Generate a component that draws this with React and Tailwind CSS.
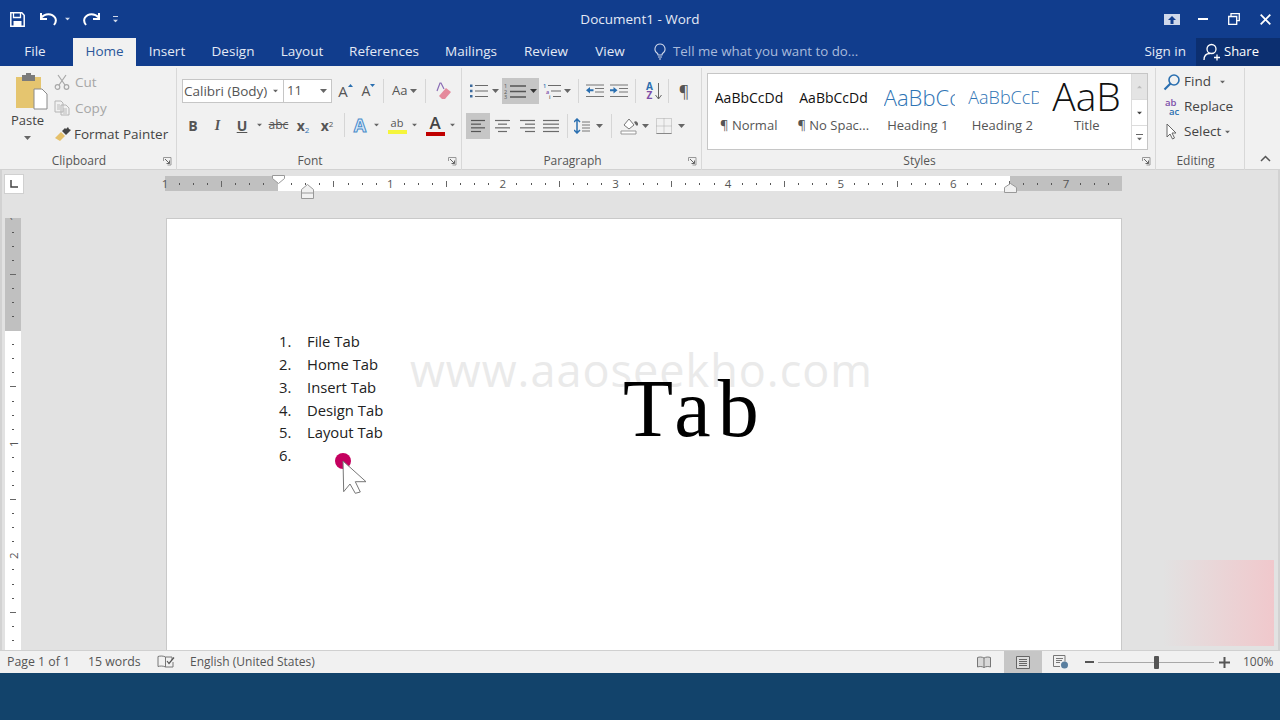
import React from "react";

const Caret = ({ className = "", color = "#666" }) => (
  <svg width="7" height="4" viewBox="0 0 7 4" className={"shrink-0 " + className}>
    <path d="M0 0h7L3.5 4z" fill={color} />
  </svg>
);

const Sep = ({ className = "" }) => <div className={"w-px bg-[#d6d6d6] shrink-0 " + className} />;

const Launcher = () => (
  <svg width="9" height="9" viewBox="0 0 9 9" className="shrink-0">
    <path d="M.5 4V.5H8V8H4.5" fill="none" stroke="#999" />
    <path d="M2 2l4.5 4.5M6.5 3.5v3h-3" fill="none" stroke="#666" />
  </svg>
);

const Lines = ({ w = 18, rows, color = "#6b6b6b" }) => (
  <svg width={w} height="14" viewBox={`0 0 ${w} 14`} className="shrink-0">
    {rows.map(([x1, x2], i) => (
      <path key={i} d={`M${x1} ${1.5 + i * (11 / (rows.length - 1))}H${x2}`} stroke={color} strokeWidth="1.2" />
    ))}
  </svg>
);

const Group = ({ label, launcher = true, className, children }) => (
  <div className={"flex flex-col shrink-0 border-r border-[#d8d8d8] h-[102px] mt-[2px] " + className}>
    <div className="flex-1 -mt-[2px]">{children}</div>
    <div className="h-[18px] flex items-center pr-[4px] text-[12px] text-[#555]">
      <div className="flex-1 text-center pr-[5px]">{label}</div>
      {launcher && <Launcher />}
    </div>
  </div>
);

const TitleBar = () => (
  <div className="h-[38px] bg-[#113d8d] flex items-center text-white shrink-0">
    <div className="w-[540px] flex items-center pl-[10px]">
      <svg width="15" height="15" viewBox="0 0 15 15">
        <path d="M.8.8h11l2.4 2.4v11H.8z" fill="none" stroke="#fff" strokeWidth="1.5" />
        <path d="M3.5 1v4.5h7V1" fill="none" stroke="#fff" strokeWidth="1.3" />
        <path d="M3.5 14V9h8v5" fill="#fff" />
      </svg>
      <svg width="18" height="14" viewBox="0 0 18 14" className="ml-[15px]">
        <path d="M1.5 5.5C5 1 12 1 15 5.5c1.3 2.2 1 5-1 7.5" fill="none" stroke="#fff" strokeWidth="2" />
        <path d="M1 1v6h6" fill="none" stroke="#fff" strokeWidth="2" />
      </svg>
      <Caret className="ml-[6px] scale-75" color="#cfd8ea" />
      <svg width="18" height="14" viewBox="0 0 18 14" className="ml-[11px]">
        <path d="M16.5 5.5C13 1 6 1 3 5.5c-1.3 2.2-1 5 1 7.5" fill="none" stroke="#fff" strokeWidth="2" />
        <path d="M17 1v6h-6" fill="none" stroke="#fff" strokeWidth="2" />
      </svg>
      <div className="ml-[12px] flex flex-col gap-[2px] items-center">
        <div className="w-[5px] h-px bg-[#cfd8ea]" />
        <Caret className="scale-75" color="#cfd8ea" />
      </div>
    </div>
    <div className="w-[200px] text-center text-[13.5px] text-[#e4eaf5]">Document1 - Word</div>
    <div className="flex-1 flex items-center justify-end">
      <svg width="16" height="11" viewBox="0 0 16 11">
        <rect x=".5" y=".5" width="15" height="10" fill="#cfd8ea" stroke="#cfd8ea" />
        <path d="M8 2l4 4H9.5v4h-3V6H4z" fill="#113d8d" />
      </svg>
      <div className="w-[10px] h-[2px] bg-white ml-[18px]" />
      <svg width="12" height="12" viewBox="0 0 12 12" className="ml-[20px]">
        <path d="M3 3V.7h8.3v7H9M.7 3.5h8v7.8h-8z" fill="none" stroke="#fff" strokeWidth="1.3" />
      </svg>
      <svg width="11" height="11" viewBox="0 0 11 11" className="ml-[20px] mr-[9px]">
        <path d="M.7.7l9.6 9.6M10.3.7L.7 10.3" stroke="#fff" strokeWidth="1.8" />
      </svg>
    </div>
  </div>
);

const tabs = [
  ["Insert", "w-[62px]"],
  ["Design", "w-[70px]"],
  ["Layout", "w-[68px]"],
  ["References", "w-[96px]"],
  ["Mailings", "w-[78px]"],
  ["Review", "w-[72px]"],
  ["View", "w-[56px]"],
];

const TabBar = () => (
  <div className="h-[28px] bg-[#113d8d] flex items-stretch text-[13.5px] text-[#e4eaf5] shrink-0">
    <div className="w-[70px] flex items-center justify-center pb-[1px]">File</div>
    <div className="ml-[3px] w-[63px] bg-[#f1f1f1] text-[#2b579a] flex items-center justify-center pb-[1px]">Home</div>
    {tabs.map(([name, w]) => (
      <div key={name} className={"flex items-center justify-center pb-[1px] " + w}>{name}</div>
    ))}
    <div className="ml-[15px] flex items-center text-[#a9bbdc] pb-[1px]">
      <svg width="14" height="17" viewBox="0 0 14 17">
        <path d="M7 1a5 5 0 0 0-3 9c.7.6 1 1.3 1 2h4c0-.7.3-1.4 1-2a5 5 0 0 0-3-9zM5 14h4M6 16h2" fill="none" stroke="#cfd8ea" strokeWidth="1.1" />
      </svg>
      <span className="ml-[6px] text-[13.3px]">Tell me what you want to do...</span>
    </div>
    <div className="flex-1 flex items-center justify-end pr-[10px] pb-[1px] text-[#e4eaf5]">Sign in</div>
    <div className="w-[84px] bg-[#0c2f70] flex items-center pl-[7px] pb-[1px]">
      <svg width="18" height="18" viewBox="0 0 18 18">
        <circle cx="8.5" cy="6" r="4.5" fill="none" stroke="#fff" strokeWidth="1.3" />
        <path d="M1 17c0-4.5 2.5-6.5 6-6.5M11 14.5h6M14 11.5v6" fill="none" stroke="#fff" strokeWidth="1.3" />
      </svg>
      <span className="ml-[3px] text-white text-[13px]">Share</span>
    </div>
  </div>
);

const Clipboard = () => (
  <Group label="Clipboard" className="w-[177px]">
    <div className="flex">
      <div className="w-[54px] flex flex-col items-center pt-[7px] pl-[1px]">
        <svg width="34" height="38" viewBox="0 0 34 38" className="ml-[8px]">
          <rect x="1" y="4" width="25" height="31" fill="#e5c56f" />
          <rect x="7" y="2" width="13" height="6" fill="#7b7b7b" />
          <rect x="11" y="0" width="5" height="4" fill="#7b7b7b" />
          <path d="M19 16h8l5 5v15H19z" fill="#fff" stroke="#8a8a8a" />
        </svg>
        <div className="text-[13px] text-[#444] -mt-[1px] leading-[20px]">Paste</div>
        <Caret className="mt-[6px]" />
      </div>
      <div className="pt-[3px] text-[13.5px] flex flex-col">
        <div className="h-[26px] flex items-center text-[#a6a6a6]">
          <svg width="16" height="16" viewBox="0 0 16 16">
            <path d="M4 1l7 10M12 1L5 11" stroke="#a8a8a8" strokeWidth="1.2" fill="none" />
            <circle cx="3.5" cy="13" r="2.3" fill="none" stroke="#a8a8a8" strokeWidth="1.2" />
            <circle cx="12.5" cy="13" r="2.3" fill="none" stroke="#a8a8a8" strokeWidth="1.2" />
          </svg>
          <span className="ml-[5px]">Cut</span>
        </div>
        <div className="h-[26px] flex items-center text-[#a6a6a6]">
          <svg width="16" height="16" viewBox="0 0 16 16">
            <path d="M1 1h6l2 2v9H1zM7 5h5l3 3v7H7z" fill="#f1f1f1" stroke="#b5b5b5" />
            <path d="M3 5h3M3 7h3M3 9h3M9 9h4M9 11h4M9 13h4" stroke="#bbb" />
          </svg>
          <span className="ml-[5px]">Copy</span>
        </div>
        <div className="h-[26px] flex items-center text-[#444] pl-[1px]">
          <svg width="16" height="14" viewBox="0 0 16 14">
            <path d="M0 11l6-6 4 4-5 5z" fill="#e5c06a" />
            <path d="M7 4l3-3 1 1 2-2 1 2 2 1-3 3-2 2z" fill="#444" />
          </svg>
          <span className="ml-[3px]">Format Painter</span>
        </div>
      </div>
    </div>
  </Group>
);

const Font = () => (
  <Group label="Font" className="w-[285px]">
    <div className="pt-[13px] text-[#555]">
      <div className="h-[24px] flex items-center pl-[5px]">
        <div className="w-[102px] h-[24px] bg-white border border-[#c6c6c6] flex items-center pl-[1px] text-[13.5px]">
          <span className="w-[87px] overflow-hidden whitespace-nowrap">Calibri (Body)</span>
          <Caret className="scale-75 ml-[1px]" />
        </div>
        <div className="w-[48px] h-[24px] bg-white border border-[#c6c6c6] border-l-0 flex items-center pl-[3px] text-[13px] justify-between pr-[4px]">
          <span>11</span>
          <Caret />
        </div>
        <div className="w-[23px] ml-[2px] flex justify-center items-start text-[15px] leading-[20px]">
          <span>A</span>
          <svg width="5" height="3" viewBox="0 0 5 3" className="mt-[3px]"><path d="M0 3l2.5-3L5 3z" fill="#2a6fb0" /></svg>
        </div>
        <div className="w-[23px] flex justify-center items-start text-[14px] leading-[20px]">
          <span>A</span>
          <svg width="5" height="3" viewBox="0 0 5 3" className="mt-[3px]"><path d="M0 0l2.5 3L5 0z" fill="#2a6fb0" /></svg>
        </div>
        <Sep className="ml-[3px] h-[24px]" />
        <span className="ml-[8px] text-[13px]">Aa</span>
        <Caret className="ml-[3px]" />
        <Sep className="ml-[8px] h-[24px]" />
        <svg width="18" height="18" viewBox="0 0 18 18" className="ml-[8px]">
          <path d="M8 17l-3-3 7-8 5 4-6 7z" fill="#e58a9c" />
          <path d="M3 9L6 1h1l3 6" fill="none" stroke="#8a6db5" strokeWidth="1.2" />
        </svg>
      </div>
      <div className="h-[24px] mt-[10px] flex items-center pl-[4px]">
        <div className="w-[24px] text-center text-[14px] font-bold">B</div>
        <div className="w-[25px] text-center text-[14px] font-bold italic font-['Liberation_Serif',serif]">I</div>
        <div className="w-[24px] text-center text-[14px] font-bold underline">U</div>
        <Caret className="ml-[2px] scale-75" />
        <div className="w-[25px] ml-[3px] text-center text-[12px] line-through">abc</div>
        <div className="w-[24px] text-center text-[14px] font-bold">x<sub className="text-[8px] text-[#2a6fb0] font-normal">2</sub></div>
        <div className="w-[24px] text-center text-[14px] font-bold">x<sup className="text-[8px] text-[#555] font-normal">2</sup></div>
        <Sep className="ml-[5px] h-[24px]" />
        <div className="w-[26px] ml-[2px] text-center text-[18px] leading-[20px] font-bold text-[#dbeafa] [-webkit-text-stroke:1px_#4a8cc9]">A</div>
        <Caret className="scale-75" />
        <div className="w-[22px] ml-[6px] flex flex-col items-center">
          <span className="text-[11px] leading-[13px] text-[#555]">ab</span>
          <div className="w-[19px] h-[4px] bg-[#f5f53c] mt-[1px]" />
        </div>
        <Caret className="ml-[3px] scale-75" />
        <div className="w-[22px] ml-[6px] flex flex-col items-center">
          <span className="text-[17px] leading-[16px] font-semibold text-[#444]">A</span>
          <div className="w-[19px] h-[4px] bg-[#c00000] mt-px" />
        </div>
        <Caret className="ml-[3px] scale-75" />
      </div>
    </div>
  </Group>
);

const Paragraph = () => (
  <Group label="Paragraph" className="w-[240px]">
    <div className="pt-[12px]">
      <div className="h-[26px] flex items-center">
        <svg width="19" height="14" viewBox="0 0 19 14" className="ml-[7px] shrink-0">
          <path d="M6 1.5h13M6 7h13M6 12.5h13" stroke="#6b6b6b" strokeWidth="1.2" />
          <path d="M1 .5h2.5V3H1zM1 5.7h2.5v2.500H1zM1 11h2.5v2.500H1z" fill="#3c6a9c" />
        </svg>
        <Caret className="ml-[4px]" />
        <div className="ml-[3px] w-[37px] h-[26px] bg-[#c6c6c6] flex items-center pl-[2px]">
          <svg width="22" height="16" viewBox="0 0 22 16" className="shrink-0">
            <g fontSize="5.5" fill="#555" fontFamily="Open Sans">
              <text x="0" y="5">1</text>
              <text x="0" y="10.5">2</text>
              <text x="0" y="16">3</text>
            </g>
            <path d="M6 3h16M6 8.5h16M6 14h16" stroke="#555" strokeWidth="1.3" />
          </svg>
          <Caret className="ml-[4px]" color="#333" />
        </div>
        <svg width="18" height="16" viewBox="0 0 18 16" className="ml-[4px] shrink-0">
          <g fontSize="5.5" fontFamily="Open Sans" fontWeight="600">
            <text x="0" y="5" fill="#2a6fb0">1</text>
            <text x="3" y="10.5" fill="#7d4ea8">a</text>
            <text x="6" y="16" fill="#555">i</text>
          </g>
          <path d="M5 2.5h13M8 8h10M10 13.5h8" stroke="#6b6b6b" strokeWidth="1.2" />
        </svg>
        <Caret className="ml-[3px]" />
        <Sep className="ml-[7px] h-[24px]" />
        <svg width="18" height="14" viewBox="0 0 18 14" className="ml-[7px] shrink-0">
          <path d="M0 1h18M9 4.5h9M9 8h9M0 12.5h18" stroke="#777" strokeWidth="1.2" />
          <path d="M0 6.3l4-3.300v2.300h3.500v2H4v2.300z" fill="#2a6fb0" />
        </svg>
        <svg width="18" height="14" viewBox="0 0 18 14" className="ml-[6px] shrink-0">
          <path d="M0 1h18M9 4.5h9M9 8h9M0 12.5h18" stroke="#777" strokeWidth="1.2" />
          <path d="M7.5 6.3L3.500 3v2.300H0v2h3.500v2.300z" fill="#2a6fb0" />
        </svg>
        <Sep className="ml-[7px] h-[24px]" />
        <div className="ml-[8px] w-[11px] flex flex-col items-center text-[10px] leading-[9px] font-bold">
          <span className="text-[#2a6fb0]">A</span>
          <span className="text-[#7d4ea8]">Z</span>
        </div>
        <svg width="7" height="18" viewBox="0 0 7 18" className="shrink-0">
          <path d="M3.5 1v16M.5 13l3 4 3-4" fill="none" stroke="#666" />
        </svg>
        <Sep className="ml-[6px] h-[24px]" />
        <div className="ml-[7px] w-[16px] text-center text-[16px] text-[#555] leading-none">{"\u00B6"}</div>
      </div>
      <div className="h-[26px] mt-[9px] flex items-center">
        <div className="ml-[4px] w-[24px] h-[26px] bg-[#c6c6c6] flex items-center justify-center">
          <Lines w={14} rows={[[0, 14], [0, 10], [0, 14], [0, 10]]} color="#555" />
        </div>
        <div className="w-[24px] flex justify-center">
          <Lines w={15} rows={[[0, 15], [3, 12], [0, 15], [3, 12]]} />
        </div>
        <div className="w-[24px] ml-px flex justify-center">
          <Lines w={15} rows={[[0, 15], [5, 15], [0, 15], [5, 15]]} />
        </div>
        <div className="w-[24px] flex justify-center">
          <Lines w={16} rows={[[0, 16], [0, 16], [0, 16], [0, 16]]} />
        </div>
        <Sep className="ml-[4px] h-[24px]" />
        <svg width="16" height="16" viewBox="0 0 16 16" className="ml-[6px] shrink-0">
          <path d="M3 1v14M0 4l3-3 3 3M0 12l3 3 3-3" fill="none" stroke="#2a6fb0" strokeWidth="1.5" />
          <path d="M8 4h8M8 7h8M8 10h8M8 13h8" stroke="#777" />
        </svg>
        <Caret className="ml-[6px]" />
        <Sep className="ml-[8px] h-[24px]" />
        <svg width="18" height="18" viewBox="0 0 18 18" className="ml-[8px] shrink-0">
          <path d="M4 8l5-6 5 6-5 4z" fill="#fff" stroke="#777" />
          <path d="M14 5a2 2 0 0 1 3 4c-1-1-2-2-3-4z" fill="#666" />
          <path d="M1 14h15v3H1z" fill="#fff" stroke="#999" />
        </svg>
        <Caret className="ml-[4px]" />
        <svg width="16" height="16" viewBox="0 0 16 16" className="ml-[7px] shrink-0">
          <path d="M.5.5h15v15H.5zM8 .5v15M.5 8h15" fill="none" stroke="#aaa" strokeDasharray="1 1" />
          <path d="M.5 15.5h15" stroke="#888" />
        </svg>
        <Caret className="ml-[6px]" />
      </div>
    </div>
  </Group>
);

const styleCells = [
  { name: "\u00B6 Normal", sample: "AaBbCcDd", cls: "text-[14px] text-[#111] font-medium" },
  { name: "\u00B6 No Spac...", sample: "AaBbCcDd", cls: "text-[14px] text-[#111] font-medium" },
  { name: "Heading 1", sample: "AaBbCcDd", cls: "text-[22px] text-[#2e74b5] font-light" },
  { name: "Heading 2", sample: "AaBbCcDd", cls: "text-[18px] text-[#2e74b5] font-light" },
];

const Styles = () => (
  <Group label="Styles" className="w-[454px]">
    <div className="pt-[7px] pl-[5px]">
      <div className="w-[441px] h-[77px] border border-[#c6c6c6] bg-white flex">
        {styleCells.map((c) => (
          <div key={c.name} className="w-[84.5px] flex flex-col items-center">
            <div className={"w-[71px] h-[46px] overflow-hidden whitespace-nowrap flex items-center " + c.cls}>{c.sample}</div>
            <div className="text-[13px] text-[#555] leading-[18px] -mt-[4px] whitespace-nowrap pr-[3px]">{c.name}</div>
          </div>
        ))}
        <div className="w-[84.5px] flex flex-col items-center">
          <div className="mt-[9px] h-[36px] w-[72px] overflow-hidden flex items-start">
            <span className="text-[39px] leading-[26px] text-[#111] font-light">AaB</span>
          </div>
          <div className="text-[13px] text-[#555] leading-[18px] mt-[-3px] pr-[3px]">Title</div>
        </div>
        <div className="ml-auto w-[16px] flex flex-col border-l border-[#dcdcdc]">
          <div className="h-[25px] bg-[#e4e4e4] flex items-center justify-center">
            <Caret className="rotate-180 scale-75" color="#bbb" />
          </div>
          <div className="h-[26px] flex items-center justify-center border-t border-[#dcdcdc]">
            <Caret className="scale-75" color="#444" />
          </div>
          <div className="h-[24px] flex flex-col gap-[2px] items-center justify-center border-t border-[#dcdcdc]">
            <div className="w-[7px] h-px bg-[#666]" />
            <Caret className="scale-75" />
          </div>
        </div>
      </div>
    </div>
  </Group>
);

const Editing = () => (
  <Group label="Editing" launcher={false} className="w-[89px]">
    <div className="pt-[3px] pl-[7px] text-[13.5px] text-[#444]">
      <div className="h-[25px] flex items-center">
        <svg width="18" height="18" viewBox="0 0 18 18">
          <circle cx="11" cy="7" r="5" fill="none" stroke="#2a6fb0" strokeWidth="1.6" />
          <path d="M7.5 10.5L1.5 16.5" stroke="#2a6fb0" strokeWidth="2.2" />
        </svg>
        <span className="ml-[3px]">Find</span>
        <Caret className="ml-[8px] scale-75" />
      </div>
      <div className="h-[25px] flex items-center">
        <div className="w-[18px] flex flex-col text-[9.5px] leading-[9px] font-semibold">
          <span className="text-[#7d4ea8] pl-[2px]">ab</span>
          <span className="text-[#2a6fb0] pl-[6px]">ac</span>
        </div>
        <span className="ml-[3px]">Replace</span>
      </div>
      <div className="h-[25px] flex items-center">
        <svg width="18" height="18" viewBox="0 0 18 18">
          <path d="M4 1v13l3-3 2.5 5 2-1L9 10h4z" fill="#fff" stroke="#666" />
        </svg>
        <span className="ml-[3px]">Select</span>
        <Caret className="ml-[3px] scale-75" />
      </div>
    </div>
  </Group>
);

const Ribbon = () => (
  <div className="h-[104px] bg-[#f1f1f1] border-b border-[#d2d2d2] flex shrink-0">
    <Clipboard />
    <Font />
    <Paragraph />
    <Styles />
    <Editing />
    <div className="flex-1 flex items-end justify-center pb-[7px] pl-[6px]">
      <svg width="11" height="7" viewBox="0 0 11 7">
        <path d="M1 6l4.5-4.5L10 6" fill="none" stroke="#555" strokeWidth="1.5" />
      </svg>
    </div>
  </div>
);

const hCells = Array.from({ length: 68 }, (_, i) => i);
const vCells = Array.from({ length: 31 }, (_, i) => i);

const Mark = ({ i, vertical }) => {
  if (i === 8) return null;
  if (i % 8 === 0) {
    return (
      <span className={"text-[11.5px] leading-none text-[#555] " + (vertical ? "-rotate-90" : "")}>
        {Math.abs((i - 8) / 8)}
      </span>
    );
  }
  if (i % 4 === 0) return <div className={vertical ? "w-[6px] h-px bg-[#666]" : "w-px h-[6px] bg-[#666]"} />;
  return <div className={vertical ? "w-[2px] h-px bg-[#555]" : "w-px h-[2px] bg-[#555]"} />;
};

const HRuler = () => (
  <div className="flex h-[15px]">
    {hCells.map((i) => (
      <div key={i} className={"w-[14.08px] h-[15px] relative " + (i < 8 || i >= 60 ? "bg-[#c0c0c0]" : "bg-white")}>
        <div className="absolute left-[-7px] w-[14px] h-[15px] flex items-center justify-center">
          <Mark i={i} />
        </div>
      </div>
    ))}
  </div>
);

const VRuler = () => (
  <div className="flex flex-col w-[16px] ml-[3px] overflow-hidden h-[432px]">
    {vCells.map((i) => (
      <div key={i} className={"h-[14.08px] w-[16px] relative shrink-0 " + (i < 8 ? "bg-[#c0c0c0]" : "bg-white")}>
        <div className="absolute top-[-7px] h-[14px] w-[16px] flex items-center justify-center">
          <Mark i={i} vertical />
        </div>
      </div>
    ))}
  </div>
);

const items = ["File Tab", "Home Tab", "Insert Tab", "Design Tab", "Layout Tab", ""];

const Page = () => (
  <div className="ml-[145px] w-[956px] h-[432px] bg-white border border-[#c9c9c9] border-b-0 relative pt-[111px] pl-[112px] text-[14.8px] text-[#222] overflow-hidden">
    {items.map((t, i) => (
      <div key={i} className="flex h-[22.8px] items-center">
        <span className="w-[28px]">{i + 1}.</span>
        <span>{t}</span>
      </div>
    ))}
    <div className="absolute left-[243px] top-[121px] text-[45px] leading-[60px] text-[#eaeaea] tracking-[1px] whitespace-nowrap">www.aaoseekho.com</div>
    <div className="absolute left-[456px] top-[145px] text-[82px] leading-[90px] text-black tracking-[7px] font-['Liberation_Serif',serif]">Tab</div>
    <div className="absolute left-[168px] top-[234px] w-[16px] h-[16px] rounded-full bg-[#c4005f]" />
    <svg width="26" height="36" viewBox="-1 -1 26 36" className="absolute left-[175px] top-[241px]">
      <path d="M0 0L.7 30.7 7 23 12.3 32.3 17.3 31 12.3 20.7 23 20.7z" fill="#fff" stroke="#777" />
    </svg>
  </div>
);

const Workspace = () => (
  <div className="flex-1 bg-[#e2e2e2] relative overflow-hidden border-x-2 border-[#d2d2d2]">
    <div className="h-[48px] flex items-start">
      <div className="ml-[2px] mt-[4px] w-[20px] h-[20px] bg-white border border-[#d0d0d0] flex items-center justify-center">
        <svg width="8" height="8" viewBox="0 0 8 8">
          <path d="M1 0v7h7" fill="none" stroke="#444" strokeWidth="1.5" />
        </svg>
      </div>
      <div className="ml-[141px] mt-[6px] relative">
        <HRuler />
        <svg width="13" height="9" viewBox="0 0 13 9" className="absolute left-[107px] top-[-1px]">
          <path d="M.5.5h12v3l-6 5-6-5z" fill="#fff" stroke="#999" />
        </svg>
        <svg width="13" height="15" viewBox="0 0 13 15" className="absolute left-[136px] top-[8px]">
          <path d="M.5 14.5v-9l6-5 6 5v9zM.5 9h12" fill="#f1f1f1" stroke="#999" />
        </svg>
        <svg width="13" height="10" viewBox="0 0 13 10" className="absolute left-[839px] top-[7px]">
          <path d="M.5 9.5v-5l6-4 6 4v5z" fill="#f1f1f1" stroke="#999" />
        </svg>
      </div>
    </div>
    <div className="flex">
      <VRuler />
      <Page />
    </div>
    <div className="absolute left-[1161px] top-[390px] w-[111px] h-[86px] bg-gradient-to-r from-[#e2e2e2] to-[#f0c8cc]" />
  </div>
);

const StatusBar = () => (
  <div className="h-[23px] bg-[#f1f1f1] border-t border-[#d0d0d0] flex items-center text-[12.3px] text-[#555] shrink-0">
    <span className="ml-[7px] w-[81px]">Page 1 of 1</span>
    <span className="w-[69px]">15 words</span>
    <svg width="18" height="14" viewBox="0 0 18 14">
      <path d="M8.5 2C6.5.8 3 .8 1 1.5v10c2-.7 5.5-.7 7.5.5zM8.5 2H15v3M8.5 12H16V7" fill="none" stroke="#777" />
      <path d="M10 6l2 2.5 5-6" fill="none" stroke="#555" strokeWidth="1.2" />
    </svg>
    <span className="ml-[15px] text-[12px]">English (United States)</span>
    <div className="flex-1 flex items-center justify-end h-full">
      <svg width="14" height="12" viewBox="0 0 14 12">
        <path d="M7 2C5 .8 2.5.8 .5 1.5V11c2-.7 4.500-.7 6.500.5 2-1.200 4.500-1.200 6.500-.5V1.500C11.500.8 9 .8 7 2zM7 2v9.500" fill="#d8d8d8" stroke="#777" />
      </svg>
      <div className="ml-[13px] w-[38px] h-full bg-[#c6c6c6] flex items-center justify-center">
        <svg width="14" height="13" viewBox="0 0 14 13">
          <path d="M.5.5h13v12H.5z" fill="#ddd" stroke="#666" />
          <path d="M3 3.5h8M3 5.5h8M3 7.5h8M3 9.5h8" stroke="#666" />
        </svg>
      </div>
      <svg width="16" height="14" viewBox="0 0 16 14" className="ml-[11px]">
        <path d="M.5.5H12v6M.5.5v11H7" fill="none" stroke="#777" />
        <path d="M3 3.5h7M3 5.5h6M3 7.5h4" stroke="#777" />
        <circle cx="11.5" cy="10" r="3.5" fill="#5a7f9f" />
      </svg>
      <div className="ml-[16px] w-[9px] h-[2px] bg-[#555]" />
      <div className="ml-[4px] w-[116px] h-px bg-[#a8a8a8] flex items-center pl-[56px]">
        <div className="w-[5px] h-[13px] bg-[#555] rounded-[1px]" />
      </div>
      <svg width="11" height="11" viewBox="0 0 11 11" className="ml-[5px]">
        <path d="M0 5.5h11M5.5 0v11" stroke="#555" strokeWidth="2" />
      </svg>
      <span className="ml-[13px] mr-[8px] text-[12px] w-[29px] whitespace-nowrap">100%</span>
    </div>
  </div>
);

const App = () => {
  return (
    <div className="w-[1280px] h-[720px] flex flex-col overflow-hidden font-['Open_Sans',sans-serif]">
      <TitleBar />
      <TabBar />
      <Ribbon />
      <Workspace />
      <StatusBar />
      <div className="h-[47px] bg-[#12436b] shrink-0" />
    </div>
  );
};

export default App;
